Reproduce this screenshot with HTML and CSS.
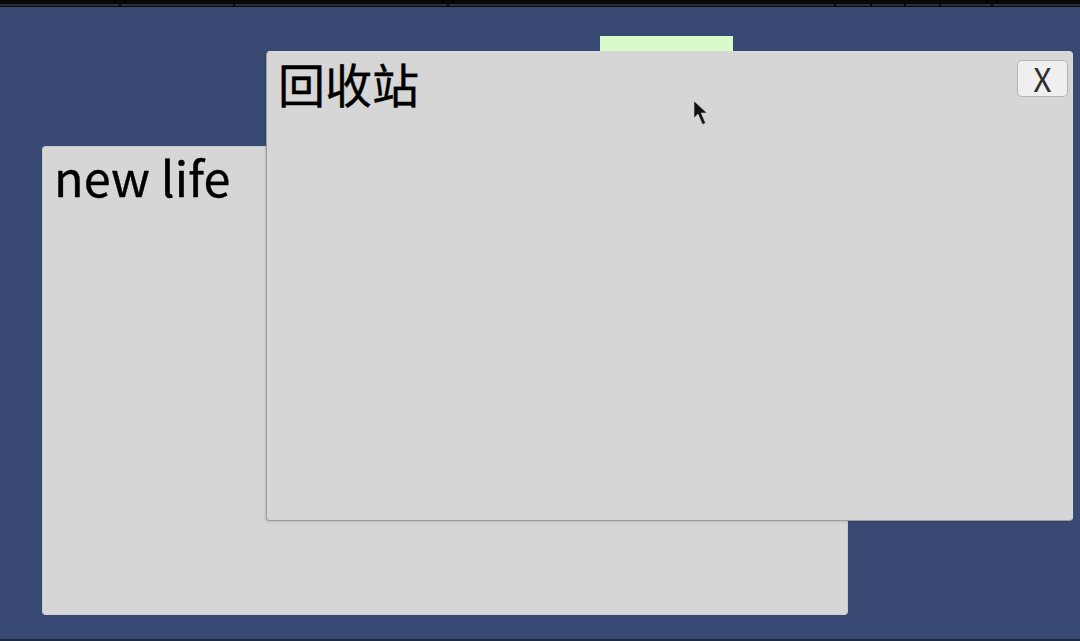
FILE: index.html
```html
<!DOCTYPE html>
<html>
<head>
<meta charset="utf-8">
<link rel="stylesheet" href="styles.css">
</head>
<body>
<div class="screen">
  <div class="topbar">
    <div class="seg s1"></div>
    <div class="seg s2"></div>
    <div class="seg s3"></div>
    <div class="seg s4"></div>
    <div class="seg s5"></div>
    <div class="seg s6"></div>
    <div class="seg s7"></div>
    <div class="seg s8"></div>
    <div class="seg s9"></div>
  </div>
  <div class="desk">
    <div class="tab-green"></div>
    <div class="window win-back">
      <div class="win-head head-back"><span class="title latin">new life</span></div>
    </div>
    <div class="window win-front">
      <div class="win-head head-front">
        <span class="title">回收站</span>
        <button class="close">X</button>
      </div>
    </div>
    <svg class="cursor" width="16" height="28" viewBox="0 0 16 28">
      <path d="M1 1 L1 18 L5 14 L9.5 24.5 L12.5 23 L8.2 13 L14 13 Z" fill="#111" stroke="#d0d0d0" stroke-width="0.6"/>
    </svg>
  </div>
  <div class="bottombar"></div>
</div>
</body>
</html>
```
FILE: styles.css
```css
html, body {
  margin: 0;
  padding: 0;
}
body {
  width: 1080px;
  height: 641px;
  overflow: hidden;
  background: #384a73;
  font-family: "Noto Sans CJK SC", "Noto Sans", sans-serif;
}
.screen {
  width: 1080px;
  height: 641px;
  display: flex;
  flex-direction: column;
}
.topbar {
  height: 7px;
  background: #080808;
  display: flex;
  align-items: flex-end;
  gap: 2px;
  box-sizing: border-box;
  padding-bottom: 1px;
}
.seg {
  height: 2px;
  background: #2d2f36;
}
.s1 { width: 119px; }
.s2 { width: 112px; }
.s3 { width: 212px; }
.s4 { width: 385px; }
.s5 { width: 34px; }
.s6 { width: 32px; }
.s7 { width: 33px; }
.s8 { width: 50px; }
.s9 { flex: 1; }
.desk {
  position: relative;
  flex: 1;
  background: #384a73;
}
.bottombar {
  height: 2px;
  background: #1f2a40;
}
.tab-green {
  position: absolute;
  left: 600px;
  top: 29px;
  width: 133px;
  height: 17px;
  background: #d8fbcc;
}
.window {
  position: absolute;
  background: #d6d6d6;
  border-radius: 4px;
  box-sizing: border-box;
}
.win-back {
  left: 42px;
  top: 139px;
  width: 806px;
  height: 469px;
  border: 1px solid #c9c9c9;
  border-bottom-color: #d9cfd3;
}
.win-front {
  left: 266px;
  top: 44px;
  width: 807px;
  height: 470px;
  border: 1px solid #dadada;
  border-left-color: #9c9c9c;
  border-bottom-color: #9a9a9a;
  box-shadow: -1px 1px 2px rgba(0,0,0,0.12);
}
.win-head {
  display: flex;
  justify-content: space-between;
  align-items: flex-start;
  padding: 0 4px 0 11px;
}
.head-front {
  padding-top: 3px;
}
.head-back {
  padding-top: 2px;
}
.title {
  font-size: 47px;
  line-height: 56px;
  color: #000;
  -webkit-text-stroke: 0.4px #000;
}
.title.latin {
  font-size: 48.5px;
  line-height: 54px;
  letter-spacing: 0.1px;
}
.close {
  margin-top: 5px;
  width: 51px;
  height: 37px;
  background: #efefef;
  border: 1px solid #b4b4b4;
  border-radius: 5px;
  font-family: "Noto Sans CJK SC", "Noto Sans", sans-serif;
  font-size: 32px;
  line-height: 35px;
  color: #2e2e2e;
  padding: 0;
  text-align: center;
}
.cursor {
  position: absolute;
  left: 693px;
  top: 93px;
}
```
